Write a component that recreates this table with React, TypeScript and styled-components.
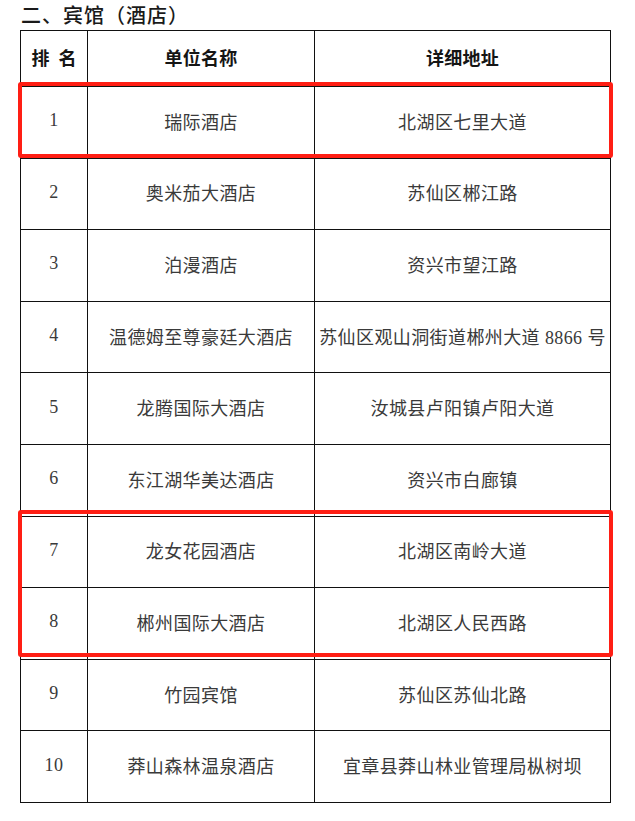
import styled, { createGlobalStyle } from "styled-components";

const GlobalStyle = createGlobalStyle`
  body {
    margin: 0;
    background: #ffffff;
  }
`;

const Page = styled.div`
  padding: 3px 0 0 20px;
  width: 635px;
  box-sizing: border-box;
`;

const Title = styled.h2`
  margin: 0;
  height: 27px;
  padding-left: 1px;
  font-family: "Noto Sans CJK SC", sans-serif;
  font-size: 20px;
  line-height: 24px;
  font-weight: 500;
  letter-spacing: 1px;
  color: #1a1a1a;
`;

const TableWrap = styled.div`
  position: relative;
  width: 590px;
`;

const Table = styled.table`
  width: 590px;
  border-collapse: collapse;
  table-layout: fixed;
  font-family: "Liberation Serif", "Noto Sans CJK SC", serif;
  font-size: 18px;
  color: #3a3a3a;

  td,
  th {
    border: 1.3px solid #111;
    padding: 0 0 3px;
    text-align: center;
    vertical-align: middle;
    white-space: nowrap;
  }
`;

const HeadRow = styled.tr`
  height: 56px;
`;

const HeadCell = styled.th<{ $spaced?: boolean }>`
  font-family: "Noto Sans CJK SC", sans-serif;
  font-weight: 700;
  font-size: 18px;
  color: #151515;
  letter-spacing: ${(p) => (p.$spaced ? "9px" : "0.3px")};
  text-indent: ${(p) => (p.$spaced ? "9px" : "0")};
`;

const Row = styled.tr`
  height: 71.6px;
`;

const Cell = styled.td`
  letter-spacing: 0.4px;
`;

const Highlight = styled.div<{ $top: number; $height: number }>`
  position: absolute;
  left: -2px;
  top: ${(p) => p.$top}px;
  width: 595px;
  height: ${(p) => p.$height}px;
  border: 4px solid #ff1e14;
  border-radius: 3px;
  box-sizing: border-box;
  pointer-events: none;
`;

const hotels = [
  { name: "瑞际酒店", addr: "北湖区七里大道" },
  { name: "奥米茄大酒店", addr: "苏仙区郴江路" },
  { name: "泊漫酒店", addr: "资兴市望江路" },
  { name: "温德姆至尊豪廷大酒店", addr: "苏仙区观山洞街道郴州大道 8866 号" },
  { name: "龙腾国际大酒店", addr: "汝城县卢阳镇卢阳大道" },
  { name: "东江湖华美达酒店", addr: "资兴市白廊镇" },
  { name: "龙女花园酒店", addr: "北湖区南岭大道" },
  { name: "郴州国际大酒店", addr: "北湖区人民西路" },
  { name: "竹园宾馆", addr: "苏仙区苏仙北路" },
  { name: "莽山森林温泉酒店", addr: "宜章县莽山林业管理局枞树坝" },
];

export default function App() {
  return (
    <Page>
      <GlobalStyle />
      <Title>二、宾馆（酒店）</Title>
      <TableWrap>
        <Table>
          <colgroup>
            <col style={{ width: 67 }} />
            <col style={{ width: 227 }} />
            <col style={{ width: 296 }} />
          </colgroup>
          <thead>
            <HeadRow>
              <HeadCell $spaced>排名</HeadCell>
              <HeadCell>单位名称</HeadCell>
              <HeadCell>详细地址</HeadCell>
            </HeadRow>
          </thead>
          <tbody>
            {hotels.map((h, i) => (
              <Row key={h.name}>
                <Cell>{i + 1}</Cell>
                <Cell>{h.name}</Cell>
                <Cell>{h.addr}</Cell>
              </Row>
            ))}
          </tbody>
        </Table>
        <Highlight $top={52} $height={76} />
        <Highlight $top={480} $height={147} />
      </TableWrap>
    </Page>
  );
}
